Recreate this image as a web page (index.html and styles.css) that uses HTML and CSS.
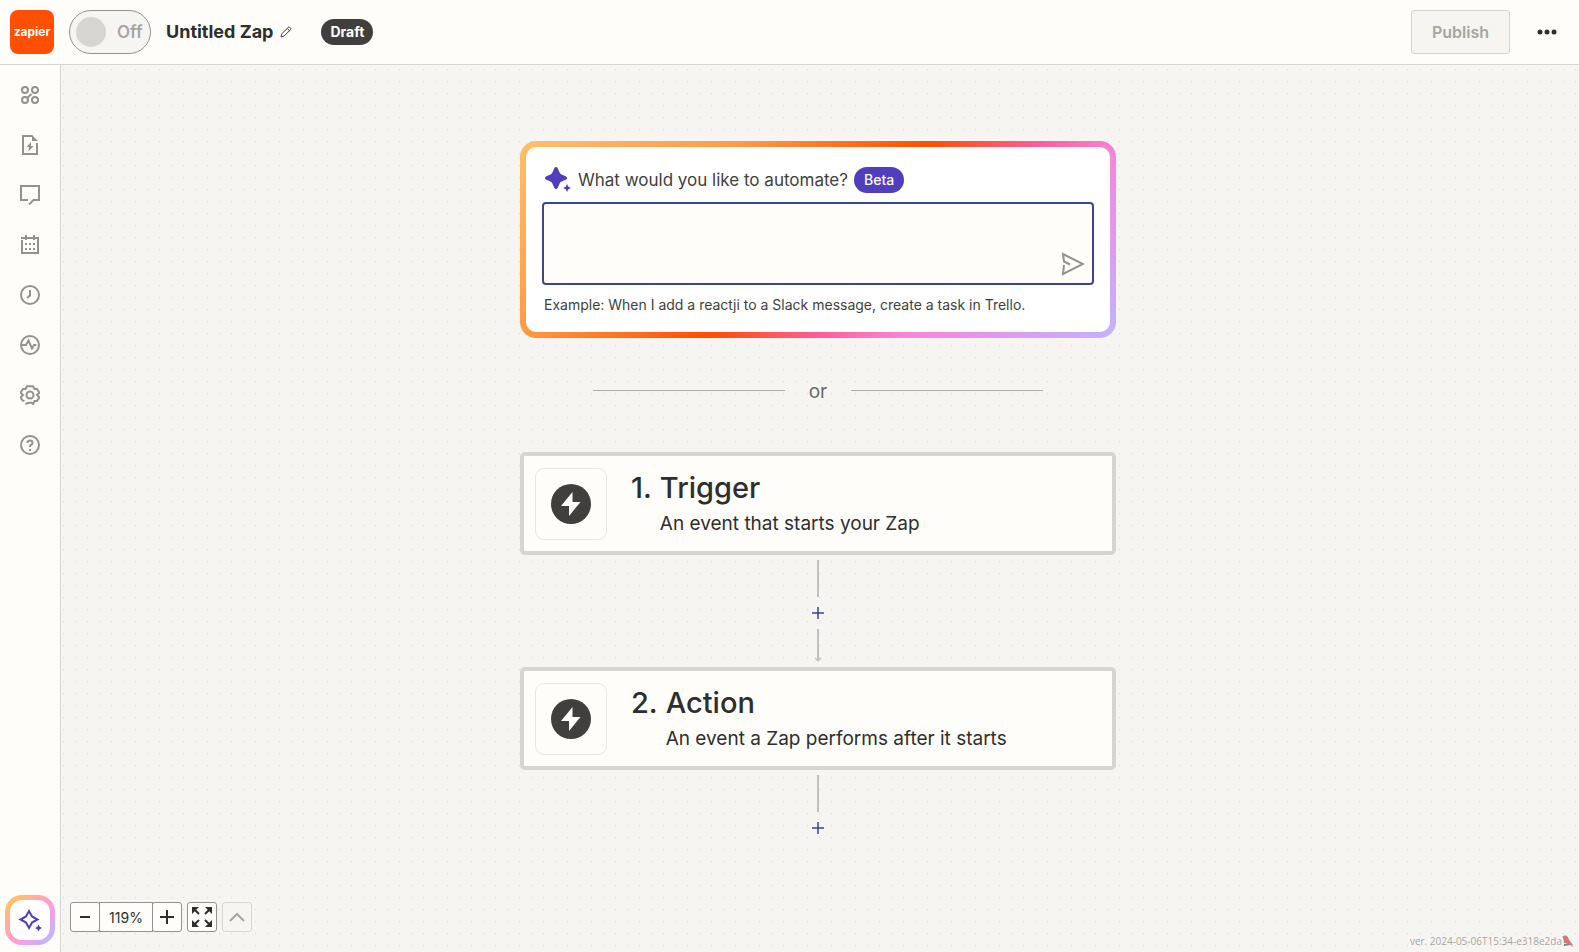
FILE: index.html
```html
<!DOCTYPE html>
<html lang="en">
<head>
<meta charset="utf-8">
<meta name="viewport" content="width=device-width, initial-scale=1">
<title>Untitled Zap</title>
<link rel="stylesheet" href="styles.css">
</head>
<body class="app">
<header class="topbar">
  <a class="logo" href="#">zapier</a>
  <label class="toggle"><input class="toggle-input" type="checkbox" role="switch"><span class="toggle-knob"></span><span class="toggle-text">Off</span></label>
  <button class="zap-name" type="button">Untitled Zap
    <svg width="12" height="12" viewBox="0 0 12 12" fill="none" stroke="#403f3e"><path d="M1 11l.8-3.2L8.2 1.400l.9-.6 2 2-.6.9L4 10.200zM7.200 2.400l2.300 2.300"/></svg>
  </button>
  <span class="draft">Draft</span>
  <button class="publish" type="button" disabled>Publish</button>
  <button class="more" type="button" aria-label="More options"><svg width="20" height="6" viewBox="0 0 20 6" fill="#2d2e2e"><circle cx="3" cy="3" r="2.500"/><circle cx="10" cy="3" r="2.500"/><circle cx="17" cy="3" r="2.500"/></svg></button>
</header>
<div class="body">
  <nav class="sidebar">
    <div class="nav-list">
      <button class="nav-item" type="button" aria-label="Apps"><svg class="nav-icon" viewBox="0 0 20 20"><circle cx="5" cy="5" r="3"/><circle cx="15" cy="5" r="3"/><circle cx="5" cy="15" r="3"/><circle cx="15" cy="15" r="3"/><path d="M7 13l4.500-4"/></svg></button>
      <button class="nav-item" type="button" aria-label="Zap details"><svg class="nav-icon" viewBox="0 0 20 20"><path d="M12.500 1H3v18h14V8"/><path class="solid" d="M12 0l6 6h-6zM11 7l-4.500 5H9l-.5 4.500L13.500 11H11z"/></svg></button>
      <button class="nav-item" type="button" aria-label="Notes"><svg class="nav-icon" viewBox="0 0 20 20"><path d="M8 15H1V1h18v14h-5.500L9 19.500"/></svg></button>
      <button class="nav-item" type="button" aria-label="Schedule"><svg class="nav-icon" viewBox="0 0 20 20"><path d="M2 5v13h16V3H1M6 0v5M14 0v5"/><path class="solid" d="M5 8h2v2H5zM9 8h2v2H9zM13 8h2v2h-2zM5 13h2v2H5zM9 13h2v2H9zM13 13h2v2h-2z"/></svg></button>
      <button class="nav-item" type="button" aria-label="History"><svg class="nav-icon" viewBox="0 0 20 20"><circle cx="10" cy="10" r="9"/><path d="M10 5v5.500L7 13"/></svg></button>
      <button class="nav-item" type="button" aria-label="Activity"><svg class="nav-icon" viewBox="0 0 20 20"><circle cx="10" cy="10" r="9"/><path d="M1.500 10H6l2.500-4.500 3.500 8 2-3.500h2.500"/></svg></button>
      <button class="nav-item" type="button" aria-label="Settings"><svg class="nav-icon" viewBox="0 0 20 20"><circle cx="10" cy="10" r="3.500"/><path d="M4.500 16L2.500 15.500 1 13V12l2-2-2-2V7l2-3h2.500L7 1.200h6L14.500 4H17l2 3v1l-2 2 2 2v1l-2 3h-2.500L13 19l-1.500-1.200h-3L5.500 19"/></svg></button>
      <button class="nav-item" type="button" aria-label="Help"><svg class="nav-icon" viewBox="0 0 20 20"><circle cx="10" cy="10" r="9"/><path d="M7.500 8q0-2.500 2.500-2.500t2.500 2.200q0 1.300-1.300 2T10 12"/><path class="solid" d="M9 14h2v2H9z"/></svg></button>
    </div>
    <button class="assistant" type="button" aria-label="AI assistant"><svg width="24" height="24" viewBox="0 0 24 24"><path fill="none" stroke="#503ebd" stroke-width="2" d="M11 3L8 8.500 2.500 11.500 8 14.500 11 20l3-5.500 5.500-3-5.500-3z"/><path fill="#503ebd" d="M20.500 16.500l1.200 2.300 2.300 1.200-2.300 1.200-1.200 2.300-1.200-2.300-2.300-1.200 2.300-1.200z"/></svg></button>
  </nav>
  <main class="canvas">
    <div class="flow">
      <section class="prompt">
        <div class="prompt-head">
          <svg width="28" height="26" viewBox="0 0 28 26" fill="#503ebd"><path d="M12 0q1.200 0 1.600 1l2 4.500q.6 1.400 2 2l4.500 2q1 .5 1 1.500t-1 1.500l-4.500 2q-1.400.6-2 2l-2 4.500q-.4 1-1.600 1t-1.600-1l-2-4.500q-.6-1.400-2-2l-4.500-2Q1 12 1 11t.9-1.500l4.500-2q1.400-.6 2-2l2-4.500Q10.800 0 12 0zM23 17l1.300 2.700L27 21l-2.700 1.300L23 25l-1.300-2.700L19 21l2.700-1.300z"/></svg>
          <label for="automate">What would you like to automate?</label>
          <span class="beta">Beta</span>
        </div>
        <div class="prompt-box">
          <textarea class="prompt-input" id="automate"></textarea>
          <button class="send" type="button" aria-label="Send"><svg width="24" height="24" viewBox="0 0 24 24" fill="none" stroke="#95928e" stroke-width="2"><path d="M9 12.500L3 9.500 2 2l20 10L2 22l1-9"/></svg></button>
        </div>
        <p class="example">Example: When I add a reactji to a Slack message, create a task in Trello.</p>
      </section>
      <div class="or">or</div>
      <button class="step" type="button">
        <span class="step-icon"><svg width="40" height="40" viewBox="0 0 40 40"><circle cx="20" cy="20" r="20" fill="#403f3e"/><path fill="#fffdf9" d="M21.500 8L10 22h8v10l11.500-14h-8z"/></svg></span>
        <span class="step-number">1.</span>
        <span class="step-text"><span class="step-title">Trigger</span><span class="step-desc">An event that starts your Zap</span></span>
      </button>
      <div class="connector">
        <span class="line"></span>
        <button class="add" type="button" aria-label="Add step"><svg width="12" height="12" viewBox="0 0 12 12" stroke="#3d4592" stroke-width="1.500"><path d="M6 0v12M0 6h12"/></svg></button>
        <svg width="8" height="33" viewBox="0 0 8 33" fill="none" stroke="#c0bfbc"><path stroke-width="2" d="M4 0v32"/><path stroke-width="1.200" d="M1 29l3 3 3-3"/></svg>
      </div>
      <button class="step" type="button">
        <span class="step-icon"><svg width="40" height="40" viewBox="0 0 40 40"><circle cx="20" cy="20" r="20" fill="#403f3e"/><path fill="#fffdf9" d="M21.500 8L10 22h8v10l11.500-14h-8z"/></svg></span>
        <span class="step-number">2.</span>
        <span class="step-text"><span class="step-title">Action</span><span class="step-desc">An event a Zap performs after it starts</span></span>
      </button>
      <div class="connector">
        <span class="line"></span>
        <button class="add" type="button" aria-label="Add step"><svg width="12" height="12" viewBox="0 0 12 12" stroke="#3d4592" stroke-width="1.500"><path d="M6 0v12M0 6h12"/></svg></button>
      </div>
    </div>
    <footer class="canvas-foot">
      <div class="zoom">
        <button class="tool" type="button" aria-label="Zoom out"><svg width="14" height="14" viewBox="0 0 14 14" stroke="#2d2e2e" stroke-width="2"><path d="M2 7h10"/></svg></button>
        <button class="tool tool-level" type="button">119%</button>
        <button class="tool" type="button" aria-label="Zoom in"><svg width="14" height="14" viewBox="0 0 14 14" stroke="#2d2e2e" stroke-width="2"><path d="M0 7h14M7 0v14"/></svg></button>
      </div>
      <button class="tool" type="button" aria-label="Fit to view"><svg width="20" height="20" viewBox="0 0 20 20" fill="#2d2e2e" stroke="#2d2e2e" stroke-width="2"><path fill="none" d="M2 2l5 5M18 2l-5 5M2 18l5-5M18 18l-5-5"/><path stroke="none" d="M0 0h7L5 2 2 5 0 7zM20 0h-7l2 2 3 3 2 2zM0 20h7l-2-2-3-3-2-2zM20 20h-7l2-2 3-3 2-2z"/></svg></button>
      <button class="tool tool-off" type="button" disabled aria-label="Collapse"><svg width="16" height="10" viewBox="0 0 16 10" fill="none" stroke="#a8a5a0" stroke-width="2"><path d="M1 9l7-7 7 7"/></svg></button>
      <div class="version">ver. 2024-05-06T15:34-e318e2da<svg width="11" height="12" viewBox="0 0 11 12"><path fill="#cf7a7a" d="M1 2l2-2 3 2 1 3 4 5H8L6 9 2 8z"/><path fill="#8d7f7a" d="M0 2l1.500-1L2 3zM2 9h5l4 2v1L8 10 2 11z"/></svg></div>
    </footer>
  </main>
</div>
</body>
</html>
```
FILE: styles.css
```css
* { box-sizing: border-box; }

.app {
  margin: 0;
  min-height: 100vh;
  display: flex;
  flex-direction: column;
  background: #fffdf9;
  color: #2d2e2e;
  font-family: Inter, "Liberation Sans", sans-serif;
}

button { padding: 0; border: 0; background: none; color: inherit; font: inherit; cursor: pointer; }
svg { display: block; flex: none; }

.topbar {
  display: flex;
  align-items: center;
  padding: 10px 16px 10px 10px;
  border-bottom: 1px solid #d7d5d2;
}

.logo {
  display: flex;
  align-items: center;
  justify-content: center;
  width: 44px;
  height: 44px;
  padding-bottom: 2px;
  border-radius: 8px;
  background: #ff4f00;
  color: #fffdf9;
  font-size: 12px;
  font-weight: 700;
  text-decoration: none;
}

.toggle {
  position: relative;
  display: flex;
  align-items: center;
  gap: 11px;
  width: 82px;
  height: 44px;
  margin-left: 15px;
  padding: 0 6px;
  border: 1px solid #95928e;
  border-radius: 22px;
  background: #f6f5f2;
  color: #a8a5a0;
  font-size: 17px;
  font-weight: 600;
}
.toggle-input { position: absolute; inset: 0; width: 100%; height: 100%; margin: 0; opacity: 0; }
.toggle-knob { width: 30px; height: 30px; border-radius: 50%; background: #d7d5d2; }

.zap-name {
  display: flex;
  align-items: center;
  gap: 7px;
  margin-left: 15px;
  padding-bottom: 1px;
  font-size: 18px;
  font-weight: 700;
}

.draft {
  margin-left: 29px;
  padding: 0 9px;
  border-radius: 13px;
  background: #403f3e;
  color: #fffdf9;
  font-size: 14px;
  font-weight: 700;
  line-height: 26px;
}

.publish {
  height: 44px;
  margin-left: auto;
  padding: 0 20px;
  border: 1px solid #d7d5d2;
  border-radius: 3px;
  background: #f6f5f2;
  color: #a8a5a0;
  font-size: 16px;
  font-weight: 600;
}
.more { display: flex; margin-left: 21px; padding: 12px 6px; }

.body { flex: 1; display: flex; }

.sidebar {
  display: flex;
  flex-direction: column;
  justify-content: space-between;
  align-items: center;
  width: 61px;
  padding: 5px 0 7px;
  border-right: 1px solid #d7d5d2;
}
.nav-list { display: flex; flex-direction: column; }
.nav-item { display: grid; place-items: center; width: 50px; height: 50px; }
.nav-icon { width: 20px; height: 20px; fill: none; stroke: #95928e; stroke-width: 2; }
.nav-icon .solid { fill: #95928e; stroke: none; }

.assistant {
  display: grid;
  place-items: center;
  width: 50px;
  height: 50px;
  border: 5px solid transparent;
  border-radius: 17px;
  background:
    linear-gradient(#fff, #fff) padding-box,
    linear-gradient(135deg, #ffbf6e 15%, #ff9fc8 50%, #f4a0ea 65%, #c1b4ff 90%) border-box;
}

.canvas {
  flex: 1;
  display: flex;
  flex-direction: column;
  justify-content: space-between;
  background: #f6f5f2 radial-gradient(circle at 21% 38%, #dad8d5 0, transparent 1px) 0 0 / 12px 12px;
}

.flow {
  display: flex;
  flex-direction: column;
  align-items: center;
  padding: 76px 4px 0 0;
}

.prompt {
  width: 596px;
  max-width: 100%;
  padding: 20px 16px 16px;
  border: 6px solid transparent;
  border-radius: 16px;
  background:
    linear-gradient(#fff, #fff) padding-box,
    linear-gradient(139deg, #ffbf6e 0%, #ff9a45 27%, #ff4f00 50%, #ff5c93 63%, #f786da 74%, #c1b4ff 100%) border-box;
}
.prompt-head {
  display: flex;
  align-items: center;
  gap: 6px;
  height: 26px;
  padding-left: 2px;
  color: #403f3e;
  font-size: 17px;
}
.beta {
  padding: 0 10px;
  border-radius: 13px;
  background: #503ebd;
  color: #fffdf9;
  font-size: 14px;
  font-weight: 500;
  line-height: 26px;
}
.prompt-box { position: relative; margin: 9px 0; }
.prompt-input {
  display: block;
  width: 100%;
  height: 83px;
  padding: 8px 44px 8px 10px;
  border: 2px solid #3d4592;
  border-radius: 4px;
  outline: 0;
  background: #fffdf9;
  font: inherit;
  resize: none;
}
.send { position: absolute; right: 9px; bottom: 9px; }
.example { margin: 0; padding-left: 2px; color: #403f3e; font-size: 14px; line-height: 22px; }

.or {
  display: flex;
  align-items: center;
  gap: 24px;
  padding: 43px 0 49px;
  color: #6b6a68;
  font-size: 19px;
  line-height: 22px;
}
.or::before, .or::after { content: ""; width: 192px; height: 1px; margin-bottom: 4px; background: #aeacaa; }

.step {
  display: flex;
  align-items: flex-start;
  width: 596px;
  max-width: 100%;
  height: 103px;
  padding: 12px 11px;
  border: 4px solid #d7d5d2;
  border-radius: 5px;
  background: #fffdf9;
  text-align: left;
}
.step-icon {
  display: grid;
  place-items: center;
  flex: none;
  width: 72px;
  height: 72px;
  margin-right: 24px;
  border: 1px solid #e8e7e4;
  border-radius: 9px;
}
.step-number, .step-title { font-size: 29px; font-weight: 500; line-height: 40px; }
.step-number { margin-right: 8px; }
.step-text { display: flex; flex-direction: column; }
.step-desc { font-size: 19px; line-height: 32px; }

.connector { display: flex; flex-direction: column; align-items: center; padding: 5px 0; }
.line { width: 2px; height: 37px; background: #c0bfbc; }
.add { display: grid; place-items: center; width: 32px; height: 32px; }

.canvas-foot { display: flex; align-items: flex-end; gap: 5px; padding: 0 6px 0 9px; }
.zoom { display: flex; }
.tool {
  display: grid;
  place-items: center;
  width: 30px;
  height: 30px;
  margin-bottom: 20px;
  border: 1px solid #95928e;
  border-radius: 3px;
  background: #fffdf9;
}
.tool-level { width: 54px; margin-left: -1px; margin-right: -1px; border-radius: 0; font-size: 14px; }
.tool-off { border-color: #d7d5d2; background: #f6f5f2; }
.version {
  display: flex;
  align-items: center;
  margin-left: auto;
  margin-bottom: 3px;
  color: #a8a5a0;
  font-family: "Open Sans", sans-serif;
  font-size: 10px;
  line-height: 16px;
}
```
